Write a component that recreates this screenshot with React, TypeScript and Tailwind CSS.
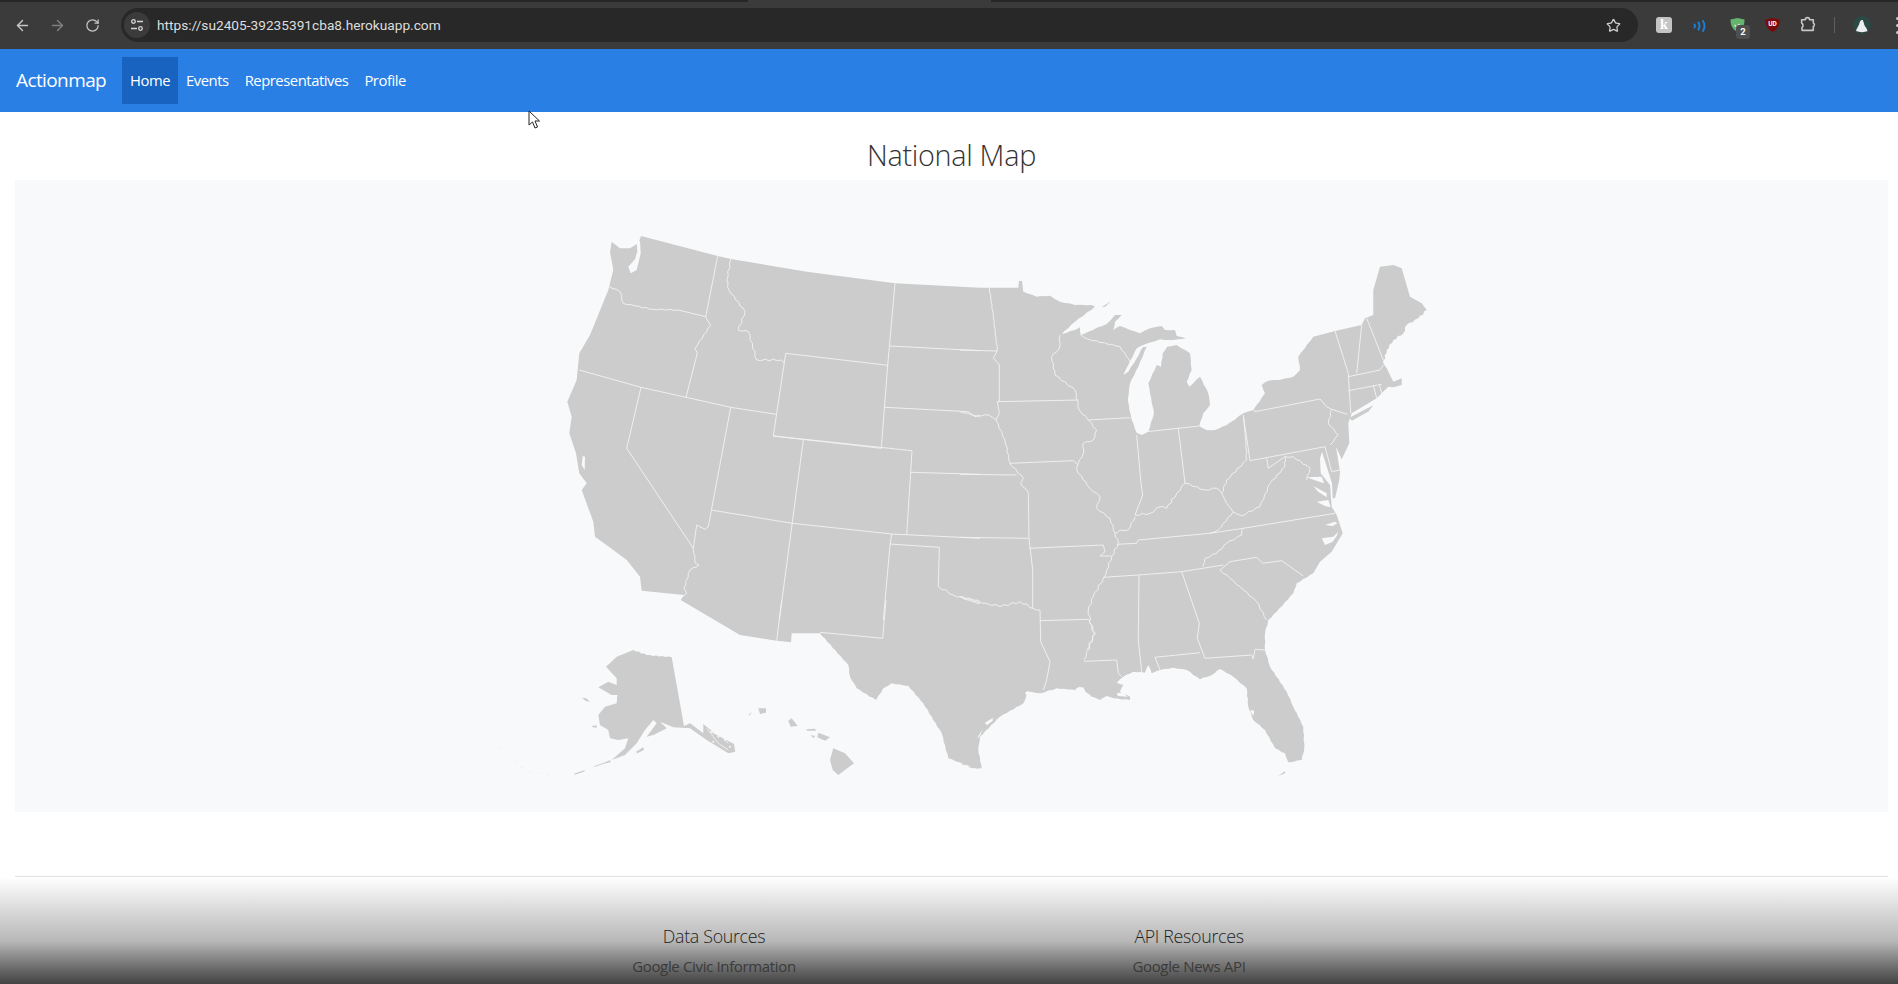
import React from "react";
import { ArrowLeft, ArrowRight, RotateCw, Star } from "lucide-react";

type Pts = number[];
const z = (ox: number, oy: number, p: Pts, k = 3): number[][] => {
  const out: number[][] = [];
  for (let i = 0; i < p.length; i += 2) out.push([ox + p[i] / k, oy + p[i + 1] / k]);
  return out;
};
const z3 = (p: Pts) => z(540, 220, p);
const z4 = (p: Pts) => z(960, 250, p);
const z5 = (p: Pts) => z(480, 600, p);
const z6 = (p: Pts) => z(960, 560, p);
const line = (pts: number[][], close = false) =>
  "M" + pts.map((q) => q[0].toFixed(1) + " " + q[1].toFixed(1)).join("L") + (close ? "Z" : "");
// deterministic small wiggle for river borders and rough coasts
const wig = (pts: number[][], amp = 0.8, step = 4) => {
  const out: number[][] = [];
  let s = 1;
  for (let i = 0; i < pts.length - 1; i++) {
    const [a, b] = pts[i];
    const [c, d] = pts[i + 1];
    const len = Math.hypot(c - a, d - b) || 1;
    const n = Math.max(1, Math.round(len / step));
    for (let j = 0; j < n; j++) {
      const t = j / n;
      s = -s;
      const o = j === 0 ? 0 : s * amp;
      out.push([a + (c - a) * t + (-(d - b) / len) * o, b + (d - b) * t + ((c - a) / len) * o]);
    }
  }
  out.push(pts[pts.length - 1]);
  return out;
};

const mainland = line(
  [
    ...z3([303, 48, 533, 108, 573, 117, 800, 155, 1065, 190, 1320, 203]),
    ...z4([175, 113, 177, 93, 186, 93, 190, 125]),
    ...wig(z4([
      190, 125, 230, 140, 270, 137, 300, 155, 345, 165, 395, 165, 405, 170, 345, 215, 305, 252, 345, 240, 360, 232, 362, 255, 385, 245,
      440, 222, 465, 195, 485, 195, 465, 215, 460, 240, 480, 228, 510, 240, 540, 250, 570, 235, 605, 228, 615, 240, 645, 240, 650, 258, 678, 265, 655, 268, 625, 270,
      600, 268, 555, 283, 530, 295, 505, 345, 490, 375, 505, 365, 530, 325, 548, 292, 560, 290, 535, 350, 510, 400, 503, 450, 515, 510, 530, 548, 545, 555, 565, 545,
      582, 490, 570, 430, 565, 400, 590, 345, 603, 350, 608, 310, 622, 290, 650, 285, 690, 310, 695, 360, 680, 395, 688, 410, 720, 380, 745, 430, 750, 465, 730, 490,
      718, 528, 740, 540, 765, 540, 800, 525, 850, 490, 880, 480, 915, 430, 905, 405, 925, 392, 960, 390, 1000, 380, 1020, 360, 1015, 320, 1060, 260,
    ]), 0.25, 5),
    ...z4([1125, 243, 1205, 225, 1215, 205, 1240, 195, 1240, 120, 1260, 50, 1300, 45, 1325, 55, 1350, 140, 1385, 160, 1400, 180]),
    ...wig(z4([1400, 180, 1375, 205, 1340, 225, 1330, 250, 1300, 270, 1280, 300, 1270, 340]), 0.7, 3),
    ...z4([
      1280, 355, 1300, 395, 1325, 385, 1325, 405, 1300, 412, 1285, 410, 1265, 430, 1250, 445, 1175, 490, 1165, 520, 1168, 580, 1145, 628, 1128, 590, 1140, 665, 1138, 690,
      1125, 745, 1118, 745, 1116, 700, 1086, 605, 1080, 625, 1082, 670, 1110, 705, 1115, 770, 1130, 795, 1140, 825, 1148, 850, 1130, 880, 1115, 905, 1080, 935, 1060, 970,
    ]),
    ...wig(z6([
      1060, 40, 1010, 70, 1000, 100, 950, 155, 925, 180, 915, 220, 915, 270, 930, 320, 980, 395, 1000, 440, 1030, 500, 1033, 565, 1025, 600, 985, 607, 975, 580, 945, 565,
      915, 510, 880, 480, 865, 440, 860, 385, 820, 350, 780, 327, 755, 345, 720, 358, 680, 330, 640, 323, 600, 330, 575, 340, 565, 315, 555, 338, 520, 335, 490, 350,
      470, 368, 490, 375, 480, 395, 510, 410, 510, 420, 460, 415, 440, 408, 420, 420, 395, 410, 360, 380, 345, 390, 290, 385, 240, 400, 205, 395, 190, 430, 120, 470, 60, 530,
      55, 570, 65, 625, 40, 625, 0, 610,
    ]), 0.3, 4),
    ...wig(z5([1500, 510, 1405, 475, 1385, 400, 1330, 310, 1285, 258, 1235, 250, 1210, 265, 1188, 300, 1130, 265, 1110, 230, 1105, 195, 1020, 100]), 0.3, 4),
    ...z5([935, 100, 933, 127, 890, 122, 780, 105]),
    ...z3([
      422, 1140, 432, 1125, 305, 1112, 300, 1070, 260, 1020, 220, 990, 165, 950, 160, 905, 125, 810, 140, 790, 118, 760, 108, 700, 88, 640, 95, 590, 82, 545, 110, 480, 118, 400,
      150, 345, 205, 210, 220, 150, 210, 95, 215, 65, 240, 85, 270, 85, 295, 70,
    ]),
  ],
  true
);

const alaska = wig(z5([460, 150, 500, 165, 575, 172]), 0.4, 3).concat(
  z5([
    612, 378, 630, 370, 670, 400, 670, 372, 710, 405, 762, 432, 766, 455, 745, 460, 680, 420, 630, 385, 580, 382, 540, 365, 560, 385, 520, 405, 500, 410, 530, 370, 520, 360, 495, 390,
    470, 430, 435, 465, 395, 480, 435, 445, 445, 415, 415, 420, 390, 415, 385, 390, 360, 375, 355, 345, 375, 320, 410, 310, 412, 285, 395, 285, 355, 262, 385, 245, 410, 255, 410, 235,
    378, 200, 410, 170,
  ])
);

const islands = [
  z4([1168, 503, 1240, 466, 1226, 484, 1176, 512]),
  z4([425, 172, 452, 154, 436, 170]),
  z6([955, 648, 975, 633, 975, 640]),
  alaska,
  z5([305, 293, 318, 295, 330, 305, 318, 303]),
  z5([335, 378, 350, 376, 350, 383, 338, 382]),
  z5([468, 455, 490, 442, 492, 450, 472, 460]),
  z5([390, 480, 372, 488, 345, 497, 340, 502, 370, 492, 392, 486]),
  z5([315, 510, 285, 520, 283, 524, 312, 515]),
  z5([1060, 445, 1095, 460, 1122, 490, 1075, 525, 1058, 510, 1050, 480]),
  z5([1015, 398, 1050, 412, 1035, 422, 1012, 412]),
  z5([978, 388, 1005, 386, 1008, 392, 982, 392]),
  z5([992, 405, 1005, 408, 1000, 415]),
  z5([925, 362, 935, 355, 953, 378, 932, 380]),
  z5([835, 325, 858, 325, 858, 338, 840, 342]),
  z5([805, 345, 815, 337, 810, 346]),
].map((p) => line(p, true));

const water = [
  // Puget Sound
  z3([290, 65, 300, 62, 302, 100, 290, 150, 272, 160, 265, 140, 285, 118, 292, 95]),
  // San Francisco Bay
  z3([128, 708, 135, 710, 134, 750, 125, 735]),
  // Chesapeake branches
  z4([1040, 682, 1085, 680, 1092, 700, 1062, 690]),
  z4([1060, 708, 1100, 730, 1100, 742, 1075, 725]),
  z4([1070, 755, 1105, 750, 1112, 772, 1095, 768]),
  // Pamlico & Albemarle Sounds
  z4([1095, 825, 1125, 815, 1132, 820, 1118, 828]),
  z4([1085, 865, 1120, 860, 1135, 845, 1130, 858, 1118, 875, 1095, 885]),
  // Florida Tampa bay
  z6([870, 450, 883, 452, 880, 468]),
  // Texas bays
  z6([75, 488, 98, 474, 98, 482, 80, 496]),
  z6([50, 536, 68, 508, 60, 528]),
  z6([195, 398, 205, 392, 210, 402, 200, 406]),
  z6([348, 384, 370, 382, 376, 394, 356, 392]),
  z6([470, 400, 490, 397, 503, 410, 474, 408]),
].map((p) => line(p, true));

// the panhandle and far Aleutians break into pale flecks
const panhandle = [
  z5([680, 385, 700, 410, 715, 430, 745, 450]),
  z5([690, 395, 725, 410, 745, 430]),
].map((p) => line(p));
const flecks = z5([695, 395, 715, 410, 700, 425, 735, 420, 750, 440]);
const aleutian = z5([55, 440, 60, 447, 105, 485, 125, 503, 150, 516, 175, 520, 205, 523, 240, 525]);

const w = (p: number[][], a?: number) => line(wig(p, a));
const borders = [
  w(z3([205, 198, 240, 215, 250, 250, 285, 258, 340, 268, 415, 270]), 0.5),
  line(z3([415, 270, 497, 290, 533, 108])),
  w(z3([497, 290, 512, 315, 465, 385, 472, 400]), 0.4),
  line(z3([472, 400, 438, 532])),
  w(z3([573, 117, 560, 180, 567, 210, 615, 275, 595, 330, 625, 335, 650, 420, 725, 420, 733, 430]), 0.7),
  line(z3([118, 450, 303, 502, 438, 532, 572, 562, 708, 583])),
  line(z3([737, 400, 1043, 436, 1024, 685, 700, 648, 737, 400]), true),
  line(z3([303, 502, 260, 685, 460, 985])),
  w(z3([460, 985, 467, 1030, 477, 1035, 450, 1050, 432, 1105, 440, 1120, 428, 1130]), 0.5),
  line(z3([572, 562, 505, 920, 495, 928, 470, 915, 460, 985])),
  line(z3([513, 870, 757, 910, 1055, 942, 1320, 955])),
  line(z3([790, 660, 718, 1200])),
  line(z5([905, 0, 890, 122])),
  line(z3([700, 648, 1116, 692, 1100, 945])),
  line(z3([1065, 190, 1043, 436])),
  line(z3([1050, 378, 1320, 392])),
  line(z3([1035, 562, 1285, 575, 1305, 590, 1320, 585])),
  line(z3([1113, 757, 1320, 763])),
  line(z3([1055, 942, 1050, 975, 1030, 1200])),
  line(z5([1218, 0, 1208, 115, 1020, 97])),
  line(z3([1050, 972, 1198, 982, 1195, 1100])),
  w([...z3([1195, 1100, 1240, 1125, 1320, 1150]), ...z4([0, 1040, 40, 1050, 80, 1060, 120, 1070, 180, 1055, 220, 1075, 240, 1080])], 0.9),
  w(z4([88, 113, 100, 200, 112, 300, 100, 325, 118, 345]), 0.3),
  line(z4([118, 345, 118, 455, 112, 455, 355, 450])),
  line(z4([0, 300, 112, 303])),
  w(z4([0, 485, 25, 490, 50, 498, 85, 495, 108, 510, 135, 570, 150, 640, 190, 685, 182, 700, 205, 728]), 0.5),
  line(z4([112, 455, 118, 490, 108, 510])),
  w(z4([300, 255, 298, 295, 275, 320, 285, 375, 345, 420, 358, 480, 385, 510, 410, 540, 400, 570, 370, 580, 370, 610, 355, 640, 350, 660, 390, 715, 420, 740, 410, 775, 450, 805, 465, 850, 480, 840, 505, 840, 525, 800]), 0.6),
  line(z4([385, 510, 512, 503])),
  line(z4([150, 640, 340, 632, 355, 645])),
  line(z4([205, 728, 207, 865, 218, 960, 218, 1075])),
  line(z4([0, 673, 170, 675])),
  line(z4([0, 862, 207, 865])),
  line(z4([207, 895, 430, 885, 435, 905, 420, 918, 455, 918])),
  w(z4([465, 850, 475, 880, 455, 920, 440, 960, 430, 985, 400, 1040, 385, 1080, 395, 1140, 405, 1150, 380, 1200]), 0.9),
  line(z4([470, 883, 530, 880, 535, 870, 750, 850, 850, 835, 1125, 790])),
  w(z4([750, 850, 775, 840, 820, 785]), 0.4),
  line(z4([430, 982, 535, 975, 665, 965, 790, 945])),
  w(z4([848, 835, 845, 855, 800, 880, 770, 910, 735, 925, 728, 950]), 0.6),
  line(z6([537, 45, 535, 240, 545, 335])),
  line(z6([665, 35, 718, 190, 712, 235, 735, 295])),
  line(z4([780, 960, 810, 935, 890, 922, 908, 940, 965, 932, 1030, 978])),
  w(z4([780, 960, 810, 985, 850, 1020, 890, 1055, 920, 1110]), 0.5),
  line(z4([240, 1112, 388, 1108])),
  line(z6([240, 150, 242, 245, 270, 305, 260, 360, 250, 390])),
  w(z6([388, 180, 405, 220, 372, 300]), 0.8),
  line(z6([372, 304, 470, 300, 475, 340, 485, 350])),
  line(z6([600, 330, 585, 292, 720, 278])),
  line(z6([735, 295, 875, 285, 880, 297, 885, 268, 915, 270])),
  line(z4([530, 555, 543, 700, 548, 735, 525, 795])),
  line(z4([655, 535, 675, 700])),
  line(z4([560, 545, 718, 528])),
  w(z4([525, 795, 570, 790, 600, 770, 620, 775, 650, 730, 675, 700, 710, 710, 735, 720, 770, 715, 785, 730]), 0.8),
  w(z4([785, 730, 800, 690, 860, 630, 858, 580]), 0.6),
  line(z4([858, 580, 850, 495])),
  line(z4([785, 730, 800, 760, 820, 785])),
  w(z4([820, 785, 845, 797, 900, 770, 930, 700, 975, 650, 975, 620, 1000, 620, 1050, 655, 1040, 690]), 0.6),
  line(z4([880, 475, 885, 485, 1080, 447, 1100, 470, 1115, 478, 1162, 493])),
  w(z4([1115, 478, 1105, 520, 1135, 555, 1110, 585]), 0.5),
  line(z4([870, 632, 1095, 590])),
  line(z4([850, 495, 870, 632])),
  line(z4([920, 625, 925, 655, 975, 620])),
  line(z4([1095, 590, 1115, 665, 1140, 660])),
  line(z4([1125, 243, 1165, 370, 1172, 490])),
  line(z4([1205, 225, 1190, 370])),
  line(z4([1165, 380, 1260, 360, 1270, 345])),
  line(z4([1165, 422, 1265, 403])),
  line(z4([1240, 405, 1250, 445])),
  line(z4([1258, 403, 1265, 430])),
  line(z4([1220, 205, 1270, 330])),
  w(z4([362, 255, 385, 268, 480, 290, 500, 320, 510, 335]), 0.4),
];

function UsMap() {
  return (
    <svg viewBox="15 180 1873 632" className="block w-full h-full" aria-hidden="true">
      <path d={mainland} fill="#cccccc" />
      {islands.map((d, i) => (
        <path key={i} d={d} fill="#cccccc" />
      ))}
      {water.map((d, i) => (
        <path key={i} d={d} fill="#f8f9fa" />
      ))}
      <g fill="none" stroke="#f3f3f3" strokeWidth="0.9" strokeLinejoin="round">
        {borders.map((d, i) => (
          <path key={i} d={d} />
        ))}
        {panhandle.map((d, i) => (
          <path key={i} d={d} />
        ))}
      </g>
      <g fill="#f8f9fa">
        {flecks.map((q, i) => (
          <circle key={i} cx={q[0]} cy={q[1]} r="1" />
        ))}
      </g>
      <g fill="#e6e6e6">
        {aleutian.map((q, i) => (
          <circle key={i} cx={q[0]} cy={q[1]} r="0.6" />
        ))}
      </g>
    </svg>
  );
}

function Toolbar() {
  return (
    <div className="relative h-[49px] bg-[#3b3b3b] border-t-[2px] border-[#262626] pb-[1px] flex items-center">
      <span className="absolute left-[748px] top-[-2px] w-[243px] h-[2px] bg-[#3b3b3b]" />
      <div className="w-[121px] shrink-0 flex items-center text-[#c7c7c7]">
        <ArrowLeft size={17} className="ml-[14px]" />
        <ArrowRight size={17} className="ml-[18px] text-[#808080]" />
        <RotateCw size={15} className="ml-[19px]" />
      </div>
      <div className="w-[1517px] h-[34px] shrink-0 rounded-full bg-[#282828] flex items-center">
        <div className="w-[26px] h-[26px] ml-[3px] rounded-full bg-[#3b3b3b] flex items-center justify-center">
          <svg width="14" height="14" viewBox="0 0 14 14" fill="none" stroke="#d5d5d5" strokeWidth="1.3">
            <circle cx="3.5" cy="3.5" r="1.8" />
            <path d="M7 3.5h6M1 10.5h6" />
            <circle cx="10.500" cy="10.500" r="1.8" />
          </svg>
        </div>
        <span className="ml-[7px] text-[13.7px] text-[#dddddd] font-['Roboto',sans-serif]">https://su2405-39235391cba8.herokuapp.com</span>
        <Star size={15} className="ml-auto mr-[17px] text-[#d0d0d0]" />
      </div>
      <div className="flex-1 relative h-[36px] font-['Roboto',sans-serif]">
        <span className="absolute left-[18px] top-[10px] w-[16px] h-[16px] rounded-[3px] bg-[#c4c4c4] text-white text-[14px] font-bold leading-[16px] text-center font-['Liberation_Serif',serif]">k</span>
        <svg className="absolute left-[55px] top-[13px]" width="14" height="12" viewBox="0 0 14 12" fill="none" stroke="#1a7fd4" strokeWidth="2" strokeLinecap="round">
          <path d="M1.500 4.500q1 1.500 0 3M5.500 2.500q2 3.500 0 7M10 1q3 5 0 10" />
        </svg>
        <svg className="absolute left-[91px] top-[10px]" width="17" height="16" viewBox="0 0 16 16">
          <path d="M1 2.500 8 1l7 1.500c0 6-2 10-7 12.500C3 12.500 1 8.500 1 2.500z" fill="#65b56f" />
          <path d="M5 8l2 2 3-3" fill="none" stroke="#d9f0dc" strokeWidth="1.200" />
        </svg>
        <span className="absolute left-[98px] top-[18px] w-[14px] h-[14px] rounded-[3px] bg-[#4f4f4f] text-white text-[9.5px] font-bold leading-[14px] text-center">2</span>
        <svg className="absolute left-[127px] top-[10px]" width="15" height="16" viewBox="0 0 15 16">
          <path d="M.5 2.500 7.500 1l7 1.500c0 6-2 10-7 12.500C2.500 12.500.5 8.500.5 2.500z" fill="#7a0a0a" />
        </svg>
        <span className="absolute left-[129px] top-[13px] w-[11px] text-white text-[6.5px] font-bold leading-[8px] text-center">UD</span>
        <svg className="absolute left-[162px] top-[9px]" width="17" height="17" viewBox="0 0 16 16" fill="none" stroke="#c7c7c7" strokeWidth="1.500" strokeLinejoin="round">
          <path d="M1.500 3.500h3.500a2 2 0 0 1 4 0h3.500v3a2 2 0 0 1 0 3.500v3.500h-10.500l-.2-2.500q1.500-1.500 1-2.500q-.2-1-1.200-2z" />
        </svg>
        <span className="absolute left-[196px] top-[10px] w-px h-[16px] bg-[#5f5f5f]" />
        <span className="absolute left-[215px] top-[9px] w-[18px] h-[18px] rounded-full bg-[#2c4a45] overflow-hidden">
          <svg width="18" height="18" viewBox="0 0 18 18">
            <path d="M3 15c.5-3 3-5 3.500-8 .3-2 1.500-3.500 3-3 1.200.5 1 2 1.500 4 .5 2.500 3 4 3.500 7-3 1.500-8 1.500-11.500 0z" fill="#eceef0" />
            <path d="M10 4.500l4-.5-3 2z" fill="#30383c" />
          </svg>
        </span>
        <span className="absolute left-[258px] top-[10px] w-[3px] h-[3px] rounded-full bg-[#c7c7c7]" />
        <span className="absolute left-[258px] top-[17px] w-[3px] h-[3px] rounded-full bg-[#c7c7c7]" />
        <span className="absolute left-[258px] top-[24px] w-[3px] h-[3px] rounded-full bg-[#c7c7c7]" />
      </div>
    </div>
  );
}

export default function App() {
  const f = "font-['Open_Sans',sans-serif]";
  return (
    <div className={"relative w-[1898px] h-[984px] overflow-hidden bg-white " + f}>
      <Toolbar />
      <nav className="h-[63px] bg-[#2a7fe4] flex items-center text-white pl-[16px]">
        <span className="text-[19px] tracking-[-0.6px] w-[106px]">Actionmap</span>
        <ul className="flex text-[14.8px] tracking-[-0.45px] h-[47px]">
          <li className="w-[56px] bg-[#1763bf] flex items-center justify-center">Home</li>
          <li className="ml-[8px] flex items-center">Events</li>
          <li className="ml-[16px] flex items-center">Representatives</li>
          <li className="ml-[16px] flex items-center">Profile</li>
        </ul>
      </nav>
      <main className="pl-[15px] pr-[10px]">
        <h1 className="h-[68px] pt-[18px] flex items-center justify-center text-[28.8px] font-light text-[#333] tracking-[-0.3px]">National Map</h1>
        <div className="h-[632px] bg-[#f8f9fa]">
          <UsMap />
        </div>
        <hr className="mt-[64px] border-t border-[#e2e2e2]" />
      </main>
      <footer className="h-[107px] pl-[5px] bg-gradient-to-b from-white via-[#b8b8b8] via-60% to-[#434343] flex justify-center pt-[47px]">
        <div className="w-[475px] text-center">
          <div className="text-[17.8px] font-light text-[#222] tracking-[-0.3px] leading-[24px]">Data Sources</div>
          <div className="text-[15px] text-[#3a3a3a] tracking-[-0.35px] leading-[20px] mt-[8px]">Google Civic Information</div>
        </div>
        <div className="w-[475px] text-center">
          <div className="text-[17.8px] font-light text-[#222] tracking-[-0.3px] leading-[24px]">API Resources</div>
          <div className="text-[15px] text-[#3a3a3a] tracking-[-0.35px] leading-[20px] mt-[8px]">Google News API</div>
        </div>
      </footer>
      <svg className="absolute left-[528px] top-[110px]" width="13" height="20" viewBox="0 0 13 20" fill="#fff" stroke="#222" strokeWidth="1">
        <path d="M1 1v14l3.500-3 2.500 6 2.500-1-2.500-6h4.500z" />
      </svg>
    </div>
  );
}
